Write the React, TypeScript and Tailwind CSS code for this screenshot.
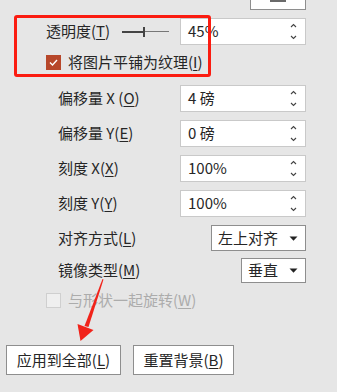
import React from "react";

const font = { fontFamily: '"Noto Sans CJK SC", "Noto Sans", sans-serif' };

function Spin() {
  return (
    <div className="flex flex-col items-center justify-between h-[17px] mr-[8px]">
      <svg width="7" height="5" viewBox="0 0 7 5">
        <path d="M1 4 L3.5 1.5 L6 4" fill="none" stroke="#444" strokeWidth="1.1" />
      </svg>
      <svg width="7" height="5" viewBox="0 0 7 5">
        <path d="M1 1 L3.5 3.5 L6 1" fill="none" stroke="#444" strokeWidth="1.1" />
      </svg>
    </div>
  );
}

function SpinBox({ value }: { value: string }) {
  return (
    <div className="ml-auto w-[126px] h-[27px] bg-white border border-[#c9c9c9] flex items-center justify-between pl-[7px]">
      <span className="text-[15px] text-[#262626]">{value}</span>
      <Spin />
    </div>
  );
}

function Caret() {
  return (
    <svg width="9" height="5" viewBox="0 0 9 5" className="ml-auto mr-[7px]">
      <path d="M0.5 0.5 L8.5 0.5 L4.5 4.8 Z" fill="#222" />
    </svg>
  );
}

function Row({ label, value }: { label: React.ReactNode; value: string }) {
  return (
    <div className="flex items-center h-[27px] pl-[58px] pr-[31px]">
      <span className="text-[15px] text-[#262626]">{label}</span>
      <SpinBox value={value} />
    </div>
  );
}

export default function App() {
  return (
    <div
      className="relative w-[337px] h-[392px] bg-[#e6e6e6] overflow-hidden"
      style={font}
    >
      {/* cut off row from above */}
      <div className="flex h-[10px] pr-[31px] items-end">
        <div className="ml-auto w-[56px] h-[30px] border border-[#8e8e8e] bg-white relative flex justify-center">
          <div className="absolute top-[19px] w-[16px] h-[2px] bg-[#6a6a6a]" />
        </div>
      </div>

      <div className="flex flex-col">
        {/* transparency */}
        <div className="flex items-center h-[27px] mt-[8px] pl-[46px] pr-[31px]">
          <span className="text-[15px] text-[#262626]">
            透明度(<u className="underline-offset-2">T</u>)
          </span>
          <div className="relative ml-[12px] w-[47px] h-[12px] flex items-center">
            <div className="w-[21px] h-[2px] bg-[#444]" />
            <div className="w-[2px] h-[10px] bg-[#444]" />
            <div className="flex-1 h-px bg-[#777]" />
          </div>
          <SpinBox value="45%" />
        </div>

        {/* tile checkbox */}
        <div className="flex items-center h-[15px] mt-[10px] pl-[46px]">
          <div className="w-[15px] h-[15px] bg-[#b7472a] flex items-center justify-center">
            <svg width="9" height="7" viewBox="0 0 9 7">
              <path d="M1 3.5 L3.5 6 L8 1" fill="none" stroke="#fff" strokeWidth="1.4" />
            </svg>
          </div>
          <span className="ml-[7px] text-[15px] text-[#262626]">
            将图片平铺为纹理(<u className="underline-offset-2">I</u>)
          </span>
        </div>

        <div className="mt-[15px] flex flex-col gap-[8px]">
          <Row
            label={<>偏移量 X (<u className="underline-offset-2">O</u>)</>}
            value="4 磅"
          />
          <Row
            label={<>偏移量 Y(<u className="underline-offset-2">E</u>)</>}
            value="0 磅"
          />
          <Row
            label={<>刻度 X(<u className="underline-offset-2">X</u>)</>}
            value="100%"
          />
          <Row
            label={<>刻度 Y(<u className="underline-offset-2">Y</u>)</>}
            value="100%"
          />
        </div>

        {/* alignment */}
        <div className="flex items-center h-[26px] mt-[8px] pl-[58px] pr-[31px]">
          <span className="text-[15px] text-[#262626]">
            对齐方式(<u className="underline-offset-2">L</u>)
          </span>
          <div className="ml-auto w-[95px] h-[26px] bg-white border border-[#8e8e8e] flex items-center pl-[6px]">
            <span className="text-[15px] text-[#262626]">左上对齐</span>
            <Caret />
          </div>
        </div>

        {/* mirror */}
        <div className="flex items-center h-[25px] mt-[7px] pl-[58px] pr-[31px]">
          <span className="text-[15px] text-[#262626]">
            镜像类型(<u className="underline-offset-2">M</u>)
          </span>
          <div className="ml-auto w-[65px] h-[25px] bg-white border border-[#8e8e8e] flex items-center pl-[6px]">
            <span className="text-[15px] text-[#262626]">垂直</span>
            <Caret />
          </div>
        </div>

        {/* rotate with shape (disabled) */}
        <div className="flex items-center h-[15px] mt-[10px] pl-[46px]">
          <div className="w-[15px] h-[15px] bg-[#efefef] border border-[#cfcfcf]" />
          <span className="ml-[7px] text-[15px] text-[#acacac]">
            与形状一起旋转(<u className="underline-offset-2">W</u>)
          </span>
        </div>

        {/* buttons */}
        <div className="flex mt-[37px] pl-[6px] gap-[12px]">
          <button className="w-[115px] h-[30px] bg-white border border-[#8e8e8e] text-[15px] text-[#262626]">
            应用到全部(<u className="underline-offset-2">L</u>)
          </button>
          <button className="w-[101px] h-[30px] bg-white border border-[#8e8e8e] text-[15px] text-[#262626]">
            重置背景(<u className="underline-offset-2">B</u>)
          </button>
        </div>
      </div>

      {/* annotation: red box */}
      <div className="absolute left-[14px] top-[15px] w-[197px] h-[62px] border-[3.5px] border-[#fb1c11] rounded-[3px] pointer-events-none" />

      {/* annotation: red arrow */}
      <svg
        className="absolute left-0 top-0 pointer-events-none"
        width="337"
        height="392"
        viewBox="0 0 337 392"
      >
        <path d="M102.5 279 L103.5 279.5 L88.5 327 L84.5 326 Z" fill="#f1231a" />
        <path d="M77.5 324 L93.5 330 L80.5 341 Z" fill="#f1231a" />
      </svg>
    </div>
  );
}
